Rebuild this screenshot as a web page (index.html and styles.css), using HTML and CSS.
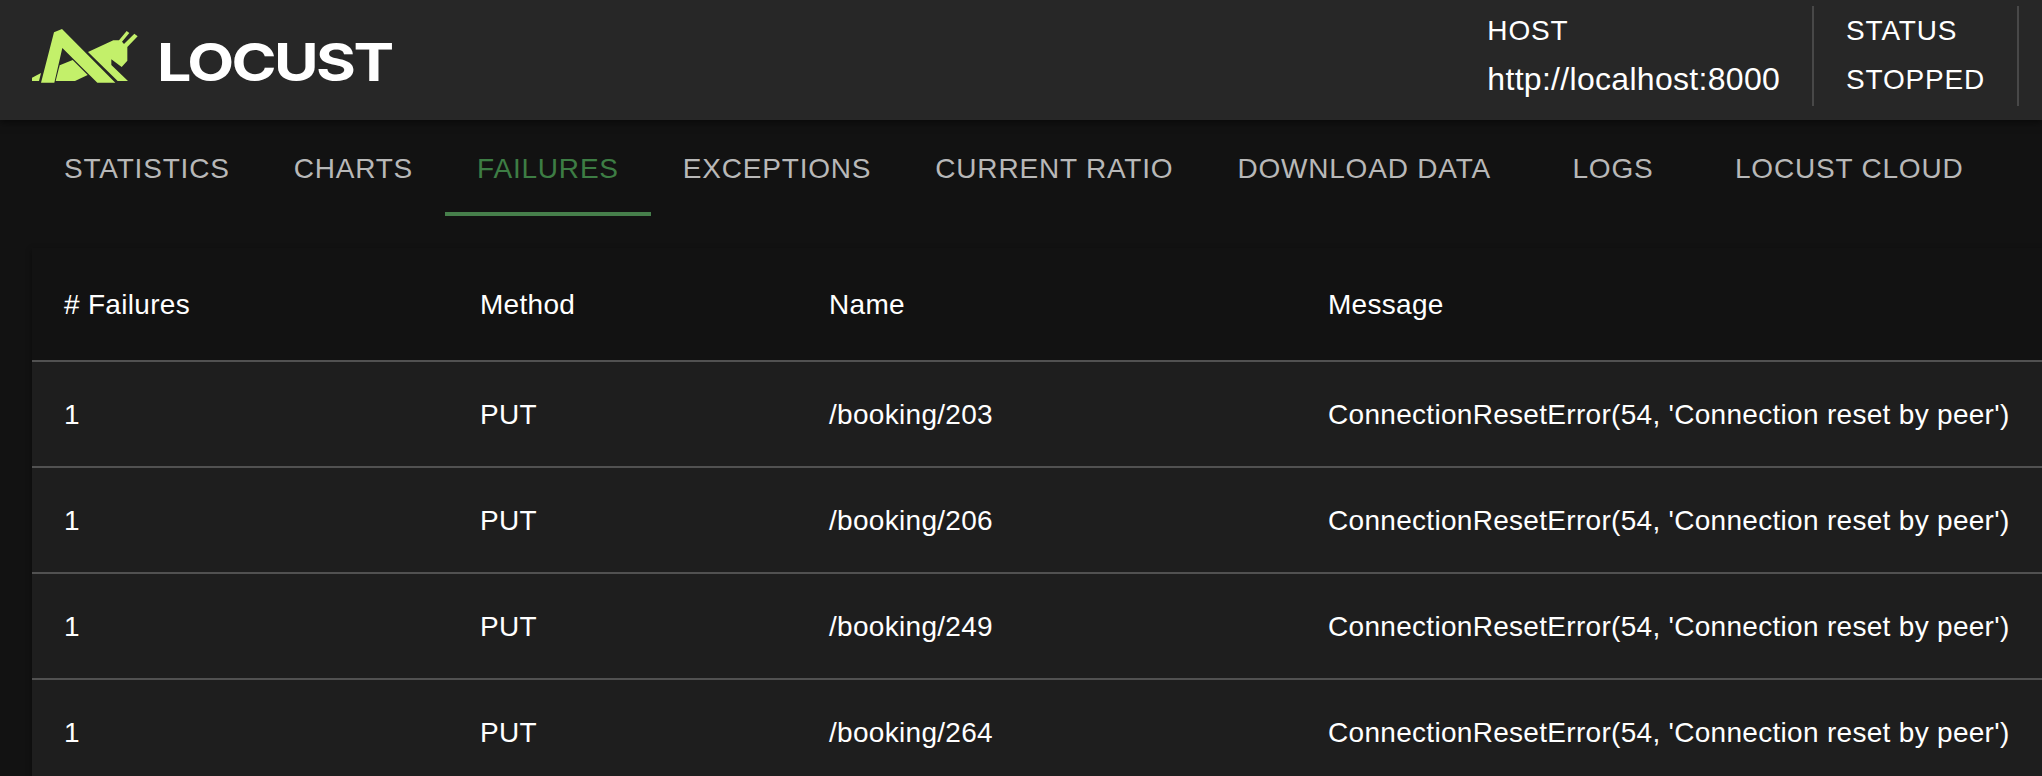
FILE: index.html
```html
<!DOCTYPE html>
<html lang="en">
<head>
<meta charset="utf-8">
<title>Locust</title>
<link rel="stylesheet" href="styles.css">
</head>
<body>
<header class="appbar">
  <div class="brand">
    <svg class="brand-icon" viewBox="0 0 330 168" aria-hidden="true">
      <path d="M90 3L66 13 27 164H67L91 60 196 164H250Z"/>
      <path d="M0 149L27 135 21 159H0Z"/>
      <path d="M71 159L83 112 122 96 167 141 129 159Z"/>
      <path d="M168 72L244 37H261L284 9 292 15 270 41 276 48 307 17 317 25 286 57V98L269 117 238 94V111L288 159H257Z"/>
    </svg>
    <svg class="brand-name" viewBox="0 0 240 56"><text x="-1" y="46" textLength="234.5" lengthAdjust="spacingAndGlyphs">LOCUST</text></svg>
  </div>
  <div class="info">
    <div class="info-item"><span class="label">HOST</span><span class="url">http://localhost:8000</span></div>
    <div class="info-item"><span class="label">STATUS</span><span class="label value">STOPPED</span></div>
  </div>
</header>
<nav class="tabs">
  <a class="tab">STATISTICS</a>
  <a class="tab">CHARTS</a>
  <a class="tab active">FAILURES</a>
  <a class="tab">EXCEPTIONS</a>
  <a class="tab">CURRENT RATIO</a>
  <a class="tab">DOWNLOAD DATA</a>
  <a class="tab">LOGS</a>
  <a class="tab">LOCUST CLOUD</a>
</nav>
<main class="panel">
  <div class="row head"><span># Failures</span><span>Method</span><span>Name</span><span>Message</span></div>
  <div class="row"><span>1</span><span>PUT</span><span>/booking/203</span><span>ConnectionResetError(54, 'Connection reset by peer')</span></div>
  <div class="row"><span>1</span><span>PUT</span><span>/booking/206</span><span>ConnectionResetError(54, 'Connection reset by peer')</span></div>
  <div class="row"><span>1</span><span>PUT</span><span>/booking/249</span><span>ConnectionResetError(54, 'Connection reset by peer')</span></div>
  <div class="row"><span>1</span><span>PUT</span><span>/booking/264</span><span>ConnectionResetError(54, 'Connection reset by peer')</span></div>
</main>
</body>
</html>
```
FILE: styles.css
```css
* { box-sizing: border-box; }
body {
  margin: 0;
  width: 2042px;
  height: 776px;
  overflow: hidden;
  background: #121212;
  color: #fff;
  font: 28px/40px "Liberation Sans", Arial, sans-serif;
}
.appbar {
  height: 120px;
  display: flex;
  justify-content: space-between;
  padding-left: 32px;
  background: #272727;
  box-shadow: 0 2px 8px rgba(0, 0, 0, .6);
}
.brand { display: flex; align-items: flex-start; padding-top: 28px; gap: 16px; }
.brand-icon { width: 110px; height: 56px; fill: #c3f06a; }
.brand-name { width: 240px; height: 56px; margin-top: 7px; overflow: visible; }
.brand-name text { font: 700 52px Inter, sans-serif; letter-spacing: -2.2px; fill: #fff; }
.info { display: flex; padding: 6px 23px 14px 0; }
.info-item {
  display: flex;
  flex-direction: column;
  padding: 0 32px;
  border-right: 2px solid #484848;
}
.label { height: 48px; line-height: 49px; letter-spacing: .8px; }
.value { line-height: 52px; }
.url { font-size: 32px; line-height: 50px; letter-spacing: .3px; }
.tabs { display: flex; height: 96px; padding-left: 32px; }
.tab {
  min-width: 180px;
  padding: 0 32px;
  line-height: 97px;
  text-align: center;
  white-space: nowrap;
  color: #b8b8b8;
  letter-spacing: .8px;
}
.tab.active { color: #3d7d44; border-bottom: 4px solid #467f4b; }
.panel { margin: 32px 0 0 32px; background: #1e1e1e; box-shadow: 0 2px 6px rgba(0, 0, 0, .4); }
.row {
  display: grid;
  grid-template-columns: 416px 349px 499px 1fr;
  height: 106px;
  padding: 33px 0 0 32px;
  border-bottom: 2px solid #515151;
  letter-spacing: .3px;
  white-space: nowrap;
}
.head { height: 114px; line-height: 48px; background: #121212; }
```
